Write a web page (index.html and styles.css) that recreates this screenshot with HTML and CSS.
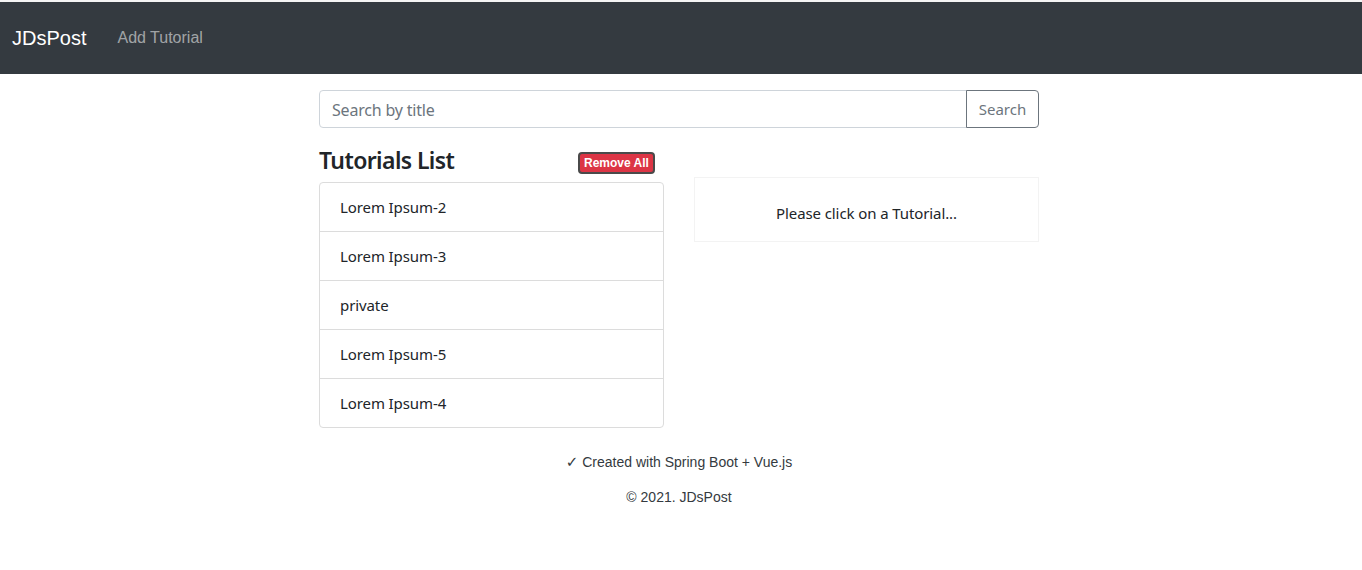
FILE: index.html
```html
<!DOCTYPE html>
<html>
<head>
<meta charset="utf-8">
<link rel="stylesheet" href="styles.css">
</head>
<body>
<div class="topline"></div>
<nav class="navbar">
  <a class="brand">JDsPost</a>
  <a class="nav-link">Add Tutorial</a>
</nav>
<main class="container">
  <div class="input-group">
    <input class="form-control" type="text" placeholder="Search by title">
    <button class="btn-search">Search</button>
  </div>
  <div class="row">
    <div class="col">
      <div class="list-head">
        <h4 class="title">Tutorials List</h4>
        <button class="btn-remove">Remove All</button>
      </div>
      <ul class="list-group">
        <li class="list-item">Lorem Ipsum-2</li>
        <li class="list-item">Lorem Ipsum-3</li>
        <li class="list-item">private</li>
        <li class="list-item">Lorem Ipsum-5</li>
        <li class="list-item">Lorem Ipsum-4</li>
      </ul>
    </div>
    <div class="col">
      <div class="hint-box">Please click on a Tutorial...</div>
    </div>
  </div>
  <footer class="footer">
    <p class="foot-line"><span class="check">✓</span> Created with Spring Boot + Vue.js</p>
    <p class="foot-line">© 2021. JDsPost</p>
  </footer>
</main>
</body>
</html>
```
FILE: styles.css
```css
* { box-sizing: border-box; }
html, body { margin: 0; padding: 0; background: #fff; }
body {
  font-family: "Noto Sans", "Open Sans", sans-serif;
  font-size: 16px;
  color: #212529;
}
.topline { height: 2px; background: #f4f4f4; }
.navbar {
  height: 72px;
  background: #343a40;
  display: flex;
  align-items: center;
  padding: 0 12px;
  font-family: "Liberation Sans", Arial, sans-serif;
}
.brand { color: #fff; font-size: 20px; margin-right: 31px; }
.nav-link { color: rgba(255,255,255,0.55); font-size: 16px; }
.container {
  width: 720px;
  margin: 16px 0 0 319px;
}
.input-group { display: flex; height: 38px; }
.form-control {
  flex: 1;
  height: 38px;
  border: 1px solid #ced4da;
  border-radius: 4px 0 0 4px;
  padding: 2px 12px 0;
  font: 16px "Noto Sans", "Open Sans", sans-serif;
  color: #495057;
  outline: none;
}
.form-control::placeholder { color: #6c757d; letter-spacing: -0.2px; }
.btn-search {
  width: 73px;
  height: 38px;
  margin-left: -1px;
  border: 1px solid #6c757d;
  border-radius: 0 4px 4px 0;
  background: #fff;
  color: #6c757d;
  font: 15px "Noto Sans", "Open Sans", sans-serif;
  padding: 0;
}
.row { display: flex; gap: 30px; margin-top: 16px; }
.col { width: 345px; }
.list-head { display: flex; align-items: center; height: 32px; position: relative; }
.title {
  margin: 0;
  font-size: 23px;
  font-weight: 600;
  letter-spacing: -0.6px;
  line-height: 28px;
}
.btn-remove {
  position: absolute;
  left: 259px;
  top: 8px;
  height: 22px;
  padding: 0 4px;
  background: #dc3545;
  border: 2px solid #4a4a4a;
  border-radius: 4px;
  color: #fff;
  font: bold 12px "Liberation Sans", Arial, sans-serif;
}
.list-group {
  list-style: none;
  margin: 6px 0 0;
  padding: 0;
  border: 1px solid #dcdcdc;
  border-radius: 4px;
}
.list-item {
  height: 49px;
  padding: 0 20px;
  display: flex;
  align-items: center;
  font-size: 15px;
  letter-spacing: -0.1px;
  border-top: 1px solid #dcdcdc;
}
.list-item:first-child { border-top: none; height: 48px; }
.hint-box {
  margin-top: 33px;
  height: 65px;
  padding-top: 7px;
  border: 1px solid #f3f3f3;
  display: flex;
  align-items: center;
  justify-content: center;
  font-size: 15px;
  letter-spacing: -0.1px;
}
.footer {
  text-align: center;
  margin-top: 26px;
  font-family: "Liberation Sans", Arial, sans-serif;
  font-size: 14px;
  color: #343a40;
}
.check { font-family: "DejaVu Sans", sans-serif; font-size: 15px; }
.foot-line { margin: 0 0 19px; line-height: 16px; }
```
